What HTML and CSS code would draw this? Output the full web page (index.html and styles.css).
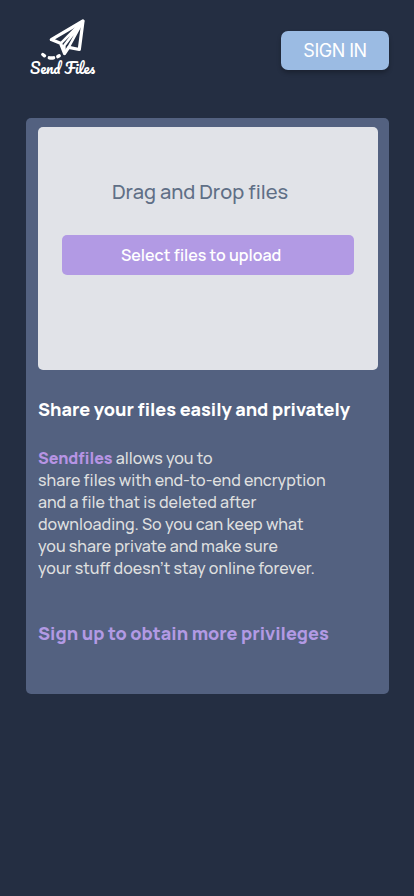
FILE: index.html
```html
<!DOCTYPE html>
<html lang="en">
<head>
<meta charset="utf-8">
<meta name="viewport" content="width=device-width, initial-scale=1">
<title>Send Files</title>
<link rel="stylesheet" href="styles.css">
</head>
<body>
<header class="header">
  <svg class="logo" width="70" height="64" viewBox="28 16 70 64" aria-label="Send Files">
    <g fill="none" stroke="#fff" stroke-linecap="round" stroke-linejoin="round">
      <path stroke-width="3.2" d="M83 21L51.3 39.6L60.5 43.2L64.5 53.5L68.7 47.4L79.3 49.5Z"/>
      <path stroke-width="2.6" d="M83 21L61 43.2M83 21L64.3 45.5L64.5 53.5M83 21L68.7 47.2"/>
      <path stroke-width="3.4" d="M42.8 54.5L44.5 55.8M49.3 57.8Q51.5 58.3 53.6 57.8M57.8 56.6L59.2 55.8"/>
    </g>
    <text class="logo-text" x="30" y="73.5" textLength="65" lengthAdjust="spacingAndGlyphs">Send Files</text>
  </svg>
  <button class="sign-in"><span>SIGN IN</span></button>
</header>
<main class="card">
  <section class="drop">
    <p class="drop-title">Drag and Drop files</p>
    <button class="select"><span>Select files to upload</span></button>
  </section>
  <h1 class="title">Share your files easily and privately</h1>
  <p class="copy">
    <span class="line"><b>Sendfiles</b> allows you to</span>
    <span class="line">share files with end-to-end encryption</span>
    <span class="line">and a file that is deleted after</span>
    <span class="line">downloading. So you can keep what</span>
    <span class="line">you share private and make sure</span>
    <span class="line">your stuff doesn’t stay online forever.</span>
  </p>
  <a class="signup">Sign up to obtain more privileges</a>
</main>
</body>
</html>
```
FILE: styles.css
```css
* { box-sizing: border-box; }
body {
  margin: 0;
  min-height: 896px;
  background: #242e42;
  font-family: Manrope, Inter, "Liberation Sans", sans-serif;
  color: #fff;
}
p, h1 { margin: 0; }
button { border: 0; padding: 0; font-family: inherit; color: #fff; }
.header {
  display: flex;
  justify-content: space-between;
  align-items: flex-start;
  height: 118px;
  padding: 16px 25px 0 28px;
}
.logo { display: block; }
.logo-text {
  font-family: Pacifico, cursive;
  font-size: 14px;
  fill: #fff;
}
.sign-in {
  width: 108px;
  height: 39px;
  margin-top: 15px;
  border-radius: 7px;
  background: #9bbbe3;
  box-shadow: 0 3px 4px rgba(0, 0, 0, .25);
  font-family: Inter, sans-serif;
  font-size: 18px;
  letter-spacing: -.5px;
}
.card {
  width: 363px;
  height: 576px;
  margin-left: 26px;
  padding: 9px 11px 0 12px;
  border-radius: 5px;
  background: #536180;
  white-space: nowrap;
}
.drop {
  height: 243.4px;
  padding: 50px 24px 0;
  border-radius: 5px;
  background: #e1e3e8;
}
.drop-title {
  padding-left: 50px;
  font-size: 20px;
  font-weight: 500;
  line-height: 30px;
  color: #5f6f86;
}
.select {
  display: block;
  width: 292.4px;
  height: 40px;
  margin-top: 28px;
  padding-left: 59px;
  border-radius: 5px;
  background: #b29ae4;
  font-size: 16px;
  font-weight: 600;
  text-align: left;
}
.title, .signup {
  display: block;
  font-size: 18px;
  font-weight: 800;
  line-height: 24px;
}
.title { margin-top: 27px; }
.copy {
  margin-top: 25.6px;
  font-size: 16px;
  font-weight: 500;
  line-height: 22px;
  color: #dedfdf;
}
.copy b { color: #b794e4; font-weight: 800; }
.line { display: block; }
.signup { margin-top: 42px; color: #b29ae4; }
```
